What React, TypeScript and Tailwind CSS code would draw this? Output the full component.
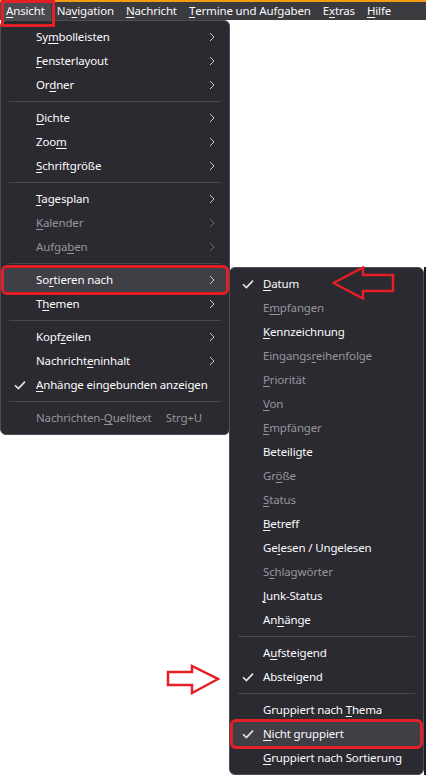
import type { ReactNode } from 'react'

type Entry =
  | 'sep'
  | { label: string; sub?: boolean; off?: boolean; checked?: boolean; shortcut?: string; active?: boolean }

// '&' marks the access key, like a Windows menu resource
function Label({ text }: { text: string }) {
  const i = text.indexOf('&')
  if (i < 0) return <>{text}</>
  return (
    <>
      {text.slice(0, i)}
      <span className="underline decoration-1 underline-offset-2">{text[i + 1]}</span>
      {text.slice(i + 2)}
    </>
  )
}

const Chevron = ({ off }: { off?: boolean }) => (
  <svg width="6" height="10" viewBox="0 0 6 10" className={off ? 'text-[#6f6e75]' : 'text-[#c9c9ce]'}>
    <path d="M1 1l4 4-4 4" fill="none" stroke="currentColor" strokeWidth="1" />
  </svg>
)

const Check = () => (
  <svg width="12" height="10" viewBox="0 0 12 10" className="text-[#e6e6ea]">
    <path d="M1 5.2l3.4 3.4L11 1.6" fill="none" stroke="currentColor" strokeWidth="1.6" />
  </svg>
)

const viewMenu: Entry[] = [
  { label: 'Sy&mbolleisten', sub: true },
  { label: '&Fensterlayout', sub: true },
  { label: 'Or&dner', sub: true },
  'sep',
  { label: '&Dichte', sub: true },
  { label: 'Zoo&m', sub: true },
  { label: '&Schriftgröße', sub: true },
  'sep',
  { label: '&Tagesplan', sub: true },
  { label: '&Kalender', sub: true, off: true },
  { label: 'Aufga&ben', sub: true, off: true },
  'sep',
  { label: 'So&rtieren nach', sub: true, active: true },
  { label: 'T&hemen', sub: true },
  'sep',
  { label: 'Kopf&zeilen', sub: true },
  { label: 'Nachricht&eninhalt', sub: true },
  { label: '&Anhänge eingebunden anzeigen', checked: true },
  'sep',
  { label: 'Nachrichten-&Quelltext', off: true, shortcut: 'Strg+U' },
]

const sortMenu: Entry[] = [
  { label: '&Datum', checked: true },
  { label: 'E&mpfangen', off: true },
  { label: '&Kennzeichnung' },
  { label: 'Eingangs&reihenfolge', off: true },
  { label: '&Priorität', off: true },
  { label: '&Von', off: true },
  { label: '&Empfänger', off: true },
  { label: 'Beteiligte' },
  { label: 'Gr&öße', off: true },
  { label: '&Status', off: true },
  { label: '&Betreff' },
  { label: 'Ge&lesen / Ungelesen' },
  { label: 'S&chlagwörter', off: true },
  { label: '&Junk-Status' },
  { label: 'An&hänge' },
  'sep',
  { label: 'A&ufsteigend' },
  { label: 'Absteigend', checked: true },
  'sep',
  { label: 'Gruppiert nach &Thema' },
  { label: '&Nicht gruppiert', checked: true, active: true },
  { label: '&Gruppiert nach Sortierung' },
]

function Menu({ items, gutter, right, className }: { items: Entry[]; gutter: string; right: string; className: string }) {
  return (
    <div className={`rounded-md border border-[#4f4e55] bg-[#2b2a30] px-[3px] py-1 ${className}`}>
      {items.map((it, i) =>
        it === 'sep' ? (
          <div key={i} className="mx-[5px] my-1 h-px bg-[#48474d]" />
        ) : (
          <div
            key={i}
            className={`flex h-6 items-center rounded-[3px] ${right} ${
              it.active ? 'bg-[#403f46] outline-[3px] outline-[#e51f26] outline-solid' : ''
            } ${it.off ? 'text-[#96959c]' : 'text-[#fbfbfe]'}`}
          >
            <span className={`flex shrink-0 justify-center ${gutter}`}>{it.checked && <Check />}</span>
            <span className="flex-1 whitespace-nowrap">
              <Label text={it.label} />
            </span>
            {it.shortcut && <span className="mr-[13px] whitespace-nowrap">{it.shortcut}</span>}
            {it.sub && <Chevron off={it.off} />}
          </div>
        ),
      )}
    </div>
  )
}

const bar = ['&Ansicht', 'Na&vigation', '&Nachricht', '&Termine und Aufgaben', 'E&xtras', '&Hilfe']

function Arrow({ className, w, h, points }: { className: string; w: number; h: number; points: string }): ReactNode {
  return (
    <svg width={w} height={h} viewBox={`0 0 ${w} ${h}`} className={`absolute ${className}`}>
      <polygon points={points} fill="none" stroke="#e51f26" strokeWidth="2.5" strokeLinejoin="miter" />
    </svg>
  )
}

export default function App() {
  return (
    <div
      className="relative h-[777px] w-[426px] overflow-hidden bg-white text-[11.5px] leading-none tracking-[-0.15px]"
      style={{ fontFamily: '"Noto Sans", "Open Sans", sans-serif' }}
    >
      <header className="flex h-5 items-center border-t-2 border-[#f39c12] bg-[#3a3a3f] text-[#fbfbfe]">
        {bar.map((b, i) => (
          <span key={b} className={`flex h-full items-center px-[6px] ${i === 0 ? 'bg-[#4a4a50]' : ''}`}>
            <Label text={b} />
          </span>
        ))}
      </header>

      <div className="flex items-start">
        <Menu items={viewMenu} gutter="w-8" right="pr-[11px]" className="w-[230px] shrink-0" />
        <div className="-ml-px flex flex-1 pt-[247px]">
          <Menu items={sortMenu} gutter="w-[30px]" right="pr-2" className="relative w-[195px] shrink-0" />
          <div className="flex-1 bg-[#1d1c22]" />
        </div>
      </div>

      {/* annotation marks */}
      <div className="absolute left-[1px] top-0 h-[27px] w-[54px] border-[3px] border-[#e51f26]" />
      <Arrow className="left-[332px] top-[266px]" w={63} h={34} points="1.5,17 31,1.5 31,9 61,9 61,25 31,25 31,32.5" />
      <Arrow className="left-[166px] top-[664px]" w={54} h={31} points="2,8 26,8 26,2 52,15 26,29 26,21 2,21" />
    </div>
  )
}
